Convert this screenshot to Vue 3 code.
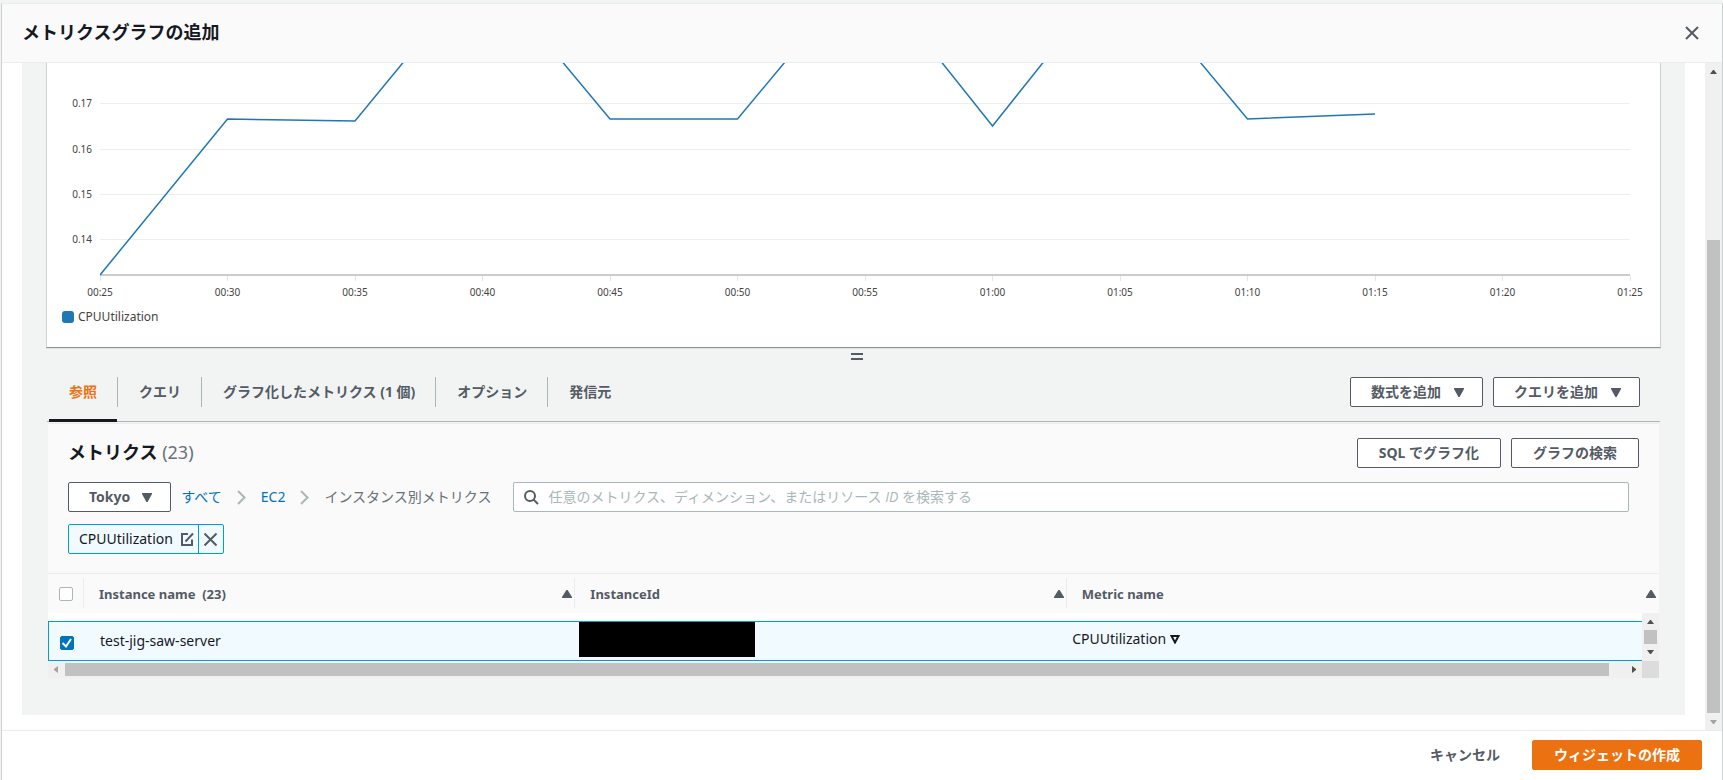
<script setup>
import { ref } from 'vue'

const yLabels = [
  { text: '0.17', y: 40 },
  { text: '0.16', y: 86 },
  { text: '0.15', y: 131 },
  { text: '0.14', y: 176 },
]
const xLabels = ['00:25', '00:30', '00:35', '00:40', '00:45', '00:50', '00:55', '01:00', '01:05', '01:10', '01:15', '01:20', '01:25']
const series = [212, 56, 58, -97, 56, 56, -97, 63, -97, 56, 51]
const points = series.map((y, i) => `${i * 100},${y}`).join(' ')

const tabs = ['参照', 'クエリ', 'グラフ化したメトリクス (1 個)', 'オプション', '発信元']
const activeTab = ref(0)
const search = ref('')
const allChecked = ref(false)
const rowChecked = ref(true)
</script>

<template>
  <div class="page">
    <section class="modal" role="dialog" aria-labelledby="dialog-title">
      <header class="modal-header">
        <h1 id="dialog-title">メトリクスグラフの追加</h1>
        <button class="icon-button" type="button" aria-label="閉じる">
          <svg width="14" height="14" viewBox="0 0 14 14"><path d="M1 1L13 13M13 1L1 13" stroke="#545b64" stroke-width="2" fill="none" /></svg>
        </button>
      </header>

      <div class="modal-body">
        <main class="content">
          <div class="chart-card">
            <div class="chart">
              <div class="y-axis">
                <span v-for="l in yLabels" :key="l.text" :style="{ top: l.y + 'px' }">{{ l.text }}</span>
              </div>
              <div class="plot">
                <svg class="plot-lines" viewBox="0 0 1200 213" preserveAspectRatio="none">
                  <path v-for="l in yLabels" :key="l.text" :d="`M-4 ${l.y + 0.5}H1200`" class="grid-line" />
                  <path d="M0 212H1200" class="base-line" />
                  <polyline :points="points" class="series" />
                </svg>
                <div class="x-axis">
                  <span v-for="t in xLabels" :key="t">{{ t }}</span>
                </div>
              </div>
            </div>
            <div class="legend"><i></i>CPUUtilization</div>
          </div>

          <div class="handle" role="separator"><i></i><i></i></div>

          <div class="tab-bar">
            <div class="tabs" role="tablist">
              <div v-for="(t, i) in tabs" :key="t" class="tab" :class="{ active: i === activeTab }">
                <button type="button" role="tab" :aria-selected="i === activeTab" @click="activeTab = i">{{ t }}</button>
              </div>
            </div>
            <div class="actions">
              <button class="btn" type="button">数式を追加<svg class="caret" width="10" height="9" viewBox="0 0 10 9"><path d="M0 0H10V1L5.600 9H4.400L0 1Z" /></svg></button>
              <button class="btn" type="button">クエリを追加<svg class="caret" width="10" height="9" viewBox="0 0 10 9"><path d="M0 0H10V1L5.600 9H4.400L0 1Z" /></svg></button>
            </div>
          </div>

          <div class="panel">
            <div class="panel-head">
              <div class="title-row">
                <h2>メトリクス <span>(23)</span></h2>
                <div class="actions">
                  <button class="btn plain" type="button">SQL でグラフ化</button>
                  <button class="btn plain" type="button">グラフの検索</button>
                </div>
              </div>
              <div class="filter-row">
                <button class="btn region" type="button">Tokyo<svg class="caret" width="10" height="9" viewBox="0 0 10 9"><path d="M0 0H10V1L5.600 9H4.400L0 1Z" /></svg></button>
                <nav class="crumbs">
                  <a href="#all">すべて</a>
                  <svg width="9" height="15" viewBox="0 0 9 15"><path d="M1 1L7.500 7.500L1 14" /></svg>
                  <a href="#ec2">EC2</a>
                  <svg width="9" height="15" viewBox="0 0 9 15"><path d="M1 1L7.500 7.500L1 14" /></svg>
                  <span>インスタンス別メトリクス</span>
                </nav>
                <label class="search">
                  <svg width="15" height="15" viewBox="0 0 15 15"><circle cx="6" cy="6" r="5" /><path d="M9.600 9.600L14 14" /></svg>
                  <input v-model="search" type="search" />
                  <span v-if="!search" class="hint">任意のメトリクス、ディメンション、またはリソース <em>ID</em> を検索する</span>
                </label>
              </div>
              <div class="token">
                <button class="token-label" type="button">
                  CPUUtilization
                  <svg width="13" height="14" viewBox="0 0 13 14"><path d="M7 2H1V13H11V7.500" /><path d="M4.500 9.500L12 1.500" /></svg>
                </button>
                <button class="token-close" type="button" aria-label="削除">
                  <svg width="13" height="13" viewBox="0 0 13 13"><path d="M0.500 0.500L12.500 12.500M12.500 0.500L0.500 12.500" /></svg>
                </button>
              </div>
            </div>

            <table class="head-table">
              <colgroup><col class="c-check" /><col class="c-wide" /><col class="c-wide" /><col /></colgroup>
              <thead>
                <tr>
                  <th scope="col"><div class="th check"><input v-model="allChecked" type="checkbox" aria-label="すべて選択" /></div></th>
                  <th scope="col"><div class="th">Instance name&nbsp; (23)<svg width="10" height="8" viewBox="0 0 10 8"><path d="M4.400 0H5.600L10 7V8H0V7Z" /></svg></div></th>
                  <th scope="col"><div class="th">InstanceId<svg width="10" height="8" viewBox="0 0 10 8"><path d="M4.400 0H5.600L10 7V8H0V7Z" /></svg></div></th>
                  <th scope="col"><div class="th last">Metric name<svg width="10" height="8" viewBox="0 0 10 8"><path d="M4.400 0H5.600L10 7V8H0V7Z" /></svg></div></th>
                </tr>
              </thead>
            </table>

            <div class="table-scroll">
              <div class="rows">
                <table>
                  <colgroup><col class="c-check" /><col class="c-name" /><col class="c-id" /><col /></colgroup>
                  <tbody>
                    <tr>
                      <td class="cell-check"><input v-model="rowChecked" type="checkbox" aria-label="test-jig-saw-server" /></td>
                      <td class="cell-name">test-jig-saw-server</td>
                      <td class="cell-id"><div class="redacted"></div></td>
                      <td class="cell-metric">CPUUtilization <svg width="10" height="9" viewBox="0 0 10 9"><path d="M1.500 1H8.500L5 7.500Z" /></svg></td>
                    </tr>
                  </tbody>
                </table>
              </div>
              <div class="vbar small">
                <svg width="7" height="4" viewBox="0 0 7 4"><path d="M0 4L3 0H4L7 4Z" fill="#505050" /></svg>
                <i></i>
                <svg width="7" height="4" viewBox="0 0 7 4"><path d="M0 0H7L4 4H3Z" fill="#505050" /></svg>
              </div>
              <div class="hbar">
                <svg width="4" height="7" viewBox="0 0 4 7"><path d="M4 0V7L0 4V3Z" fill="#a3a3a3" /></svg>
                <i></i>
                <svg width="4" height="7" viewBox="0 0 4 7"><path d="M0 0L4 3V4L0 7Z" fill="#505050" /></svg>
              </div>
              <div class="corner"></div>
            </div>
          </div>
        </main>
        <div class="vbar main-bar">
          <svg width="7" height="4" viewBox="0 0 7 4"><path d="M0 4L3 0H4L7 4Z" fill="#505050" /></svg>
          <i></i>
          <svg width="7" height="4" viewBox="0 0 7 4"><path d="M0 0H7L4 4H3Z" fill="#a3a3a3" /></svg>
        </div>
      </div>

      <footer class="modal-footer">
        <button class="btn plain link" type="button">キャンセル</button>
        <button class="btn plain primary" type="button">ウィジェットの作成</button>
      </footer>
    </section>
  </div>
</template>

<style>
body {
  margin: 0;
  background: #f2f4f4;
}
</style>

<style scoped>
* {
  box-sizing: border-box;
}
.page {
  height: 100vh;
  padding: 3px 0 0 1px;
  overflow: hidden;
  font-family: "Noto Sans", "Noto Sans CJK JP", sans-serif;
  font-size: 14px;
  line-height: 20px;
  color: #16191f;
}
.modal {
  display: flex;
  flex-direction: column;
  height: 100%;
  background: #fff;
  border: 1px solid #ccd1d1;
  border-top-color: #eaeded;
  border-bottom: 0;
}
button {
  font: inherit;
  color: inherit;
  margin: 0;
  padding: 0;
  border: 0;
  background: none;
  cursor: pointer;
}
svg {
  display: block;
  flex: none;
}
.modal-header {
  display: flex;
  align-items: center;
  justify-content: space-between;
  flex: none;
  height: 59px;
  padding: 0 23px 0 20px;
  background: #fafafa;
  border-bottom: 1px solid #eaeded;
}
h1 {
  margin: 0;
  padding-bottom: 2px;
  font-size: 18px;
  line-height: 24px;
  font-weight: 700;
}
.modal-body {
  display: flex;
  flex: 1;
  min-height: 0;
}
.content {
  flex: 1;
  min-width: 0;
  margin: 0 20px 15px;
  padding: 0 24px;
  background: #f2f4f4;
}
.chart-card {
  height: 285px;
  background: #fff;
  border: 1px solid #ccd1d1;
  border-top: 0;
  border-bottom-color: #879596;
  box-shadow: 0 1px 0 #dfe3e3;
}
.chart {
  display: flex;
  padding-right: 30px;
}
.y-axis {
  position: relative;
  width: 53px;
  font-size: 10px;
  line-height: 14px;
  color: #444;
}
.y-axis span {
  position: absolute;
  right: 8px;
  margin-top: -7px;
}
.plot {
  flex: 1;
  min-width: 0;
}
.plot-lines {
  width: 100%;
  height: 213px;
  overflow-x: visible;
}
.plot-lines path,
.plot-lines polyline {
  fill: none;
  vector-effect: non-scaling-stroke;
}
.grid-line {
  stroke: #eee;
}
.plot-lines .base-line {
  stroke: #ccc;
  stroke-width: 2;
}
.series {
  stroke: #1f77b4;
  stroke-width: 1.5;
}
.x-axis {
  display: flex;
  justify-content: space-between;
  font-size: 10px;
  line-height: 14px;
  color: #444;
}
.x-axis span {
  display: flex;
  flex-direction: column;
  align-items: center;
  width: 0;
}
.x-axis span::before {
  content: "";
  width: 1px;
  height: 5px;
  margin-bottom: 4px;
  background: #e5e5e5;
}
.legend {
  display: flex;
  align-items: center;
  gap: 4px;
  padding: 10px 15px;
  font-size: 12px;
  line-height: 16px;
  color: #444;
}
.legend i {
  width: 12px;
  height: 12px;
  border-radius: 3px;
  background: #1f77b4;
}
.handle {
  display: flex;
  flex-direction: column;
  align-items: center;
  gap: 3px;
  height: 24px;
  padding: 5px 0 0 6px;
}
.handle i {
  width: 12px;
  height: 2px;
  background: #545b64;
}
.tab-bar {
  display: flex;
  justify-content: space-between;
  height: 50px;
  margin: 0 1px;
  padding: 0 20px 0 2px;
  border-bottom: 1px solid #aab7b8;
}
.tabs {
  display: flex;
}
.tab {
  display: flex;
  align-items: flex-start;
  height: 50px;
  padding-top: 5px;
}
.tab button {
  height: 45px;
  padding: 0 20px 15px 21px;
  font-weight: 700;
  color: #545b64;
}
.tab:not(:last-child)::after {
  content: "";
  width: 1px;
  height: 30px;
  background: #aab7b8;
}
.tab.active button {
  color: #ec7211;
  padding: 0 20px 12px;
  border-bottom: 3px solid #16191f;
}
.tab-bar .actions {
  padding-top: 5px;
}
.actions {
  display: flex;
  gap: 10px;
}
.btn {
  display: flex;
  align-items: center;
  flex: none;
  height: 30px;
  padding: 0 20px;
  border: 1px solid #545b64;
  border-radius: 2px;
  background: #fff;
  color: #545b64;
  font-weight: 700;
  white-space: nowrap;
}
.btn.plain {
  padding: 0 21px;
}
.caret {
  margin: 0 -2px 0 13px;
  fill: #545b64;
}
.region .caret {
  margin-left: 12px;
}
.panel {
  margin: 1px 2px 0;
  border-top: 1px solid #eaeded;
}
.panel-head {
  padding: 14px 20px 19px;
  background: #fafafa;
}
.title-row {
  display: flex;
  align-items: center;
  justify-content: space-between;
}
h2 {
  margin: 0;
  padding-bottom: 2px;
  font-size: 18px;
  line-height: 22px;
  font-weight: 700;
}
h2 span {
  font-weight: 400;
  color: #687078;
}
.filter-row {
  display: flex;
  align-items: center;
  margin: 14px 10px 12px 0;
}
.crumbs {
  display: flex;
  align-items: center;
  gap: 15px;
  margin: 0 22px 0 10px;
  color: #687078;
  white-space: nowrap;
}
.crumbs a {
  color: #0073bb;
  text-decoration: none;
}
.crumbs svg {
  fill: none;
  stroke: #aab7b8;
  stroke-width: 2;
}
.search {
  position: relative;
  display: flex;
  align-items: center;
  flex: 1;
  min-width: 0;
  height: 30px;
  padding-left: 10px;
  border: 1px solid #aab7b8;
  border-radius: 2px;
  background: #fff;
}
.search svg {
  fill: none;
  stroke: #545b64;
  stroke-width: 2;
}
.search input {
  flex: 1;
  min-width: 0;
  margin-left: 9px;
  padding: 0;
  border: 0;
  outline: 0;
  background: none;
  font: inherit;
}
.hint {
  position: absolute;
  left: 34px;
  color: #aab7b8;
  white-space: nowrap;
  pointer-events: none;
}
.hint em {
  font-family: "Open Sans", "Liberation Sans", sans-serif;
}
.token {
  display: inline-flex;
  vertical-align: top;
  height: 30px;
  border: 1px solid #00a1c9;
  border-radius: 2px;
  background: #f1faff;
}
.token svg {
  fill: none;
  stroke: #545b64;
  stroke-width: 2;
}
.token-label {
  display: flex;
  align-items: center;
  gap: 8px;
  padding: 0 4px 0 10px;
}
.token-close {
  padding: 0 6px 0 5px;
  border-left: 1px solid #00a1c9;
}
table {
  width: 100%;
  table-layout: fixed;
  border-collapse: collapse;
}
th,
td {
  padding: 0;
  text-align: left;
}
.c-check {
  width: 36px;
}
.c-wide {
  width: 30.5%;
}
.c-name {
  width: 31%;
}
.c-id {
  width: 31%;
}
.head-table {
  background: #fafafa;
  border-top: 1px solid #eaeded;
}
.head-table th {
  height: 39px;
  color: #545b64;
  font-size: 13px;
}
.th {
  display: flex;
  align-items: center;
  justify-content: space-between;
  height: 30px;
  padding: 2px 2px 0 15px;
  border-right: 1px solid #eaeded;
}
.th svg {
  fill: #545b64;
}
.th.check {
  padding: 2px 0 0 11px;
}
.th.last {
  padding-right: 3px;
  border: 0;
}
input[type="checkbox"] {
  appearance: none;
  display: block;
  width: 14px;
  height: 14px;
  margin: 0;
  border: 1px solid #aab7b8;
  border-radius: 2px;
  background: #fff;
}
input[type="checkbox"]:checked {
  border-color: #0073bb;
  background: #0073bb url("data:image/svg+xml,%3Csvg xmlns='http://www.w3.org/2000/svg' viewBox='0 0 12 12'%3E%3Cpath d='M1.500 6L5 9.500L10 2' fill='none' stroke='white' stroke-width='2'/%3E%3C/svg%3E") center / 12px 12px no-repeat;
}
.table-scroll {
  display: grid;
  grid-template-columns: 1fr 17px;
}
.rows {
  padding-top: 8px;
  background: #fff;
}
.rows table {
  background: #f1faff;
  box-shadow: inset 1px 1px 0 #00a1c9, inset 0 -1px 0 #00a1c9;
}
.rows td {
  height: 40px;
}
.cell-check {
  padding: 4px 0 0 12px;
}
.cell-name {
  padding-left: 16px;
}
.rows .cell-id {
  vertical-align: top;
  padding: 1px 0 0 1px;
}
.redacted {
  width: 176px;
  height: 35px;
  background: #000;
}
.rows .cell-metric {
  padding: 0 0 4px 0;
}
.cell-metric svg {
  display: inline-block;
  fill: #fff;
  stroke: #16191f;
  stroke-width: 2;
}
.vbar {
  display: flex;
  flex-direction: column;
  align-items: center;
  width: 17px;
  background: #f0f0f0;
}
.vbar i {
  width: 13px;
  background: #c1c1c1;
}
.small {
  padding: 7px 0;
  justify-content: space-between;
}
.small i {
  height: 14px;
}
.main-bar {
  flex: none;
  padding: 7px 0 6px;
}
.main-bar i {
  flex: 1;
  margin: 166px 0 7px;
}
.hbar {
  display: flex;
  align-items: center;
  height: 17px;
  padding: 0 6px;
  background: #f0f0f0;
}
.hbar i {
  flex: 1;
  height: 13px;
  margin: 0 23px 0 7px;
  background: #c1c1c1;
}
.corner {
  background: #dcdcdc;
}
.modal-footer {
  display: flex;
  align-items: flex-start;
  justify-content: flex-end;
  gap: 10px;
  flex: none;
  height: 50px;
  padding: 9px 20px 0;
  border-top: 1px solid #eaeded;
}
.btn.link {
  border-color: transparent;
  background: none;
}
.btn.primary {
  border-color: #ec7211;
  background: #ec7211;
  color: #fff;
}
</style>
